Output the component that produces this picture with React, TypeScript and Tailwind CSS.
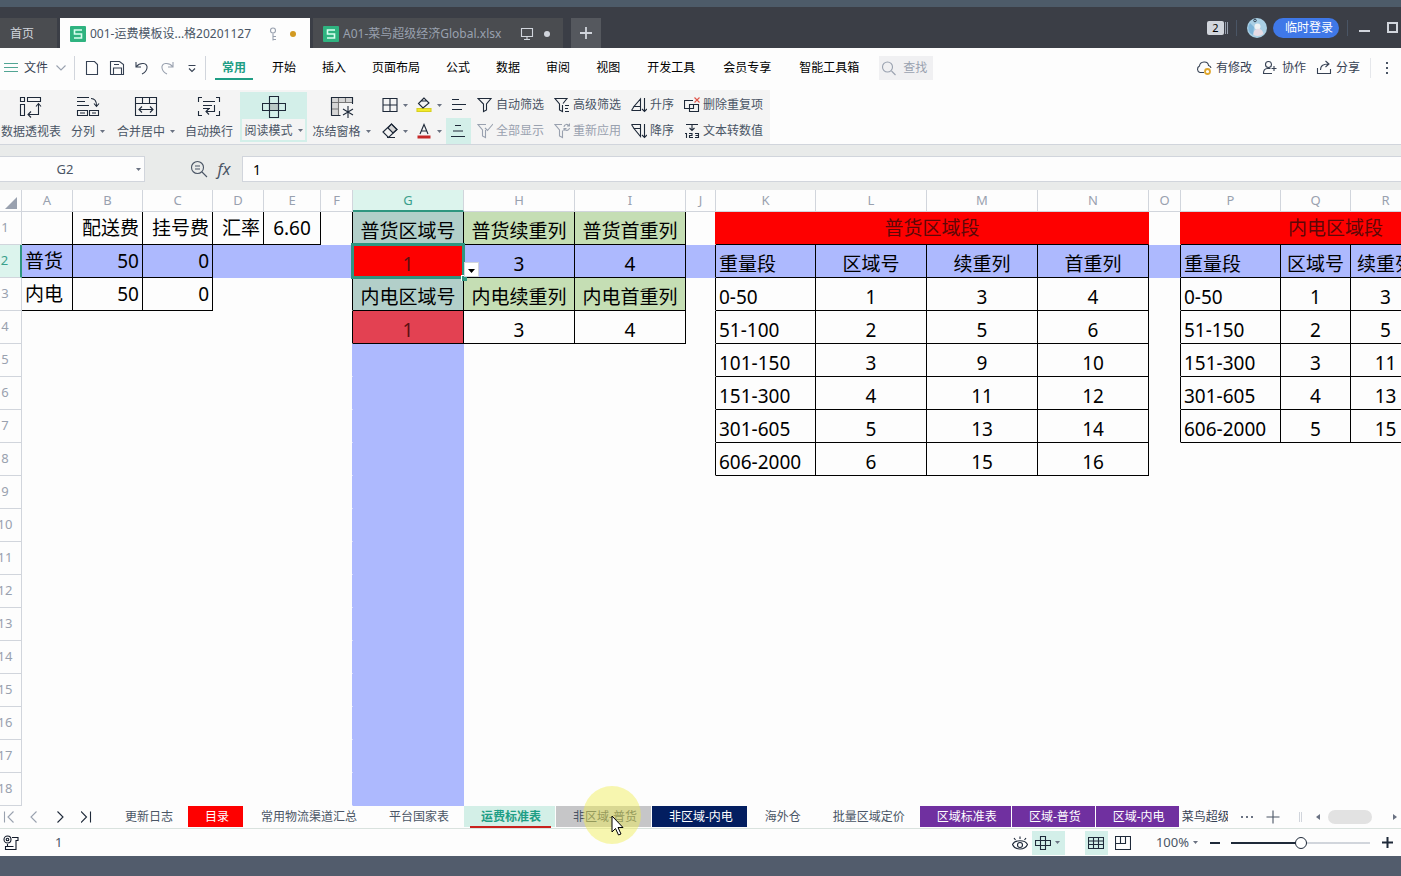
import { Fragment } from 'react';
import type { ReactNode } from 'react';

/* ---------- icons ---------- */

function Icon({ w = 16, h = 16, className = '', children }: { w?: number; h?: number; className?: string; children: ReactNode }) {
  return (
    <svg
      width={w}
      height={h}
      viewBox={`0 0 ${w} ${h}`}
      fill="none"
      stroke="currentColor"
      strokeWidth="1.1"
      className={`shrink-0 ${className}`}
      aria-hidden="true"
    >
      {children}
    </svg>
  );
}

const Caret = () => (
  <svg width="5" height="3" viewBox="0 0 5 3" className="shrink-0 fill-gray-500" aria-hidden="true">
    <path d="M0 0h5L2.5 3z" />
  </svg>
);

const SheetLogo = () => (
  <svg width="16" height="16" viewBox="0 0 16 16" className="shrink-0" aria-hidden="true">
    <rect width="16" height="16" rx="1" fill="#2fb380" />
    <path d="M12 4H4.5v4h7v4H4" fill="none" stroke="#d9fff0" strokeWidth="1.6" />
  </svg>
);

const FunnelPath = 'M1 1.5h13L9.5 7v6l-3 1.5V7z';

const Cross = () => (
  <Icon w={24} h={24}>
    <path d="M7.500 1.500h9v21h-9z M0.500 8.500h23v7h-23z" />
    <path d="M7.500 8.500h9v7h-9z" fill="#b9c9c6" />
  </Icon>
);

/* ---------- data ---------- */

const menus = ['开始', '插入', '页面布局', '公式', '数据', '审阅', '视图'];
const wideMenus = ['开发工具', '会员专享', '智能工具箱'];

const bigTools: { label: string; caret?: boolean; active?: boolean; width: string; icon: ReactNode }[] = [
  {
    label: '数据透视表',
    width: 'w-[62px]',
    icon: (
      <Icon w={24} h={24}>
        <path d="M1.500 2.500h4v4h-4z M8.500 2.500h13v4h-13z M1.500 9.500h4v11h-4z M19.500 9v10.500H9 M17 11.500l2.500-3 2.500 3 M12 16.500l-3 3 3 3" />
      </Icon>
    ),
  },
  {
    label: '分列',
    caret: true,
    width: 'w-[52px]',
    icon: (
      <Icon w={24} h={24}>
        <path d="M1 2.500h12 M1 6.500h8 M1 10.500h12 M1.500 15.500h10v5h-10z M13.500 15.500h9v5h-9z M4 18h5 M16 18h4 M15 3.500c4 0 5.500 2 5.500 7 M18 8.500l2.500 3 2.500-3" />
      </Icon>
    ),
  },
  {
    label: '合并居中',
    caret: true,
    width: 'w-[64px]',
    icon: (
      <Icon w={24} h={24}>
        <path d="M1.500 2.500h21v18h-21z M1.500 8.500h21 M8.500 2.500v6 M15.500 2.500v6 M5 14.500h14 M8 11.500l-3 3 3 3 M16 11.500l3 3-3 3" />
      </Icon>
    ),
  },
  {
    label: '自动换行',
    width: 'w-[62px]',
    icon: (
      <Icon w={24} h={24}>
        <path d="M5 2.500H1.500V7 M19 2.500h3.500V7 M5 20.500H1.500V16 M19 20.500h3.500V16 M6 6.500h12 M6 10.500h9 M6 13.500h7 M17.500 10v6.500H9 M12 13.500l-3 3 3 3" />
      </Icon>
    ),
  },
  { label: '阅读模式', caret: true, active: true, width: 'w-[67px]', icon: <Cross /> },
  {
    label: '冻结窗格',
    caret: true,
    width: 'w-[69px]',
    icon: (
      <Icon w={24} h={24}>
        <path d="M1.500 2.500h21v5h-21z M1.500 7.500h7v13h-7z" fill="#d6d6d6" stroke="#777" />
        <path d="M8.500 2.500v5 M15.500 2.500v5 M1.500 14h7" stroke="#777" />
        <path d="M1.500 20.500v-18h21V9 M1.500 20.500h9 M18 11v12 M13 14l10 6 M23 14l-10 6" />
      </Icon>
    ),
  },
];

const textTools: { label: string; off?: boolean; icon: ReactNode }[] = [
  { label: '自动筛选', icon: <Icon><path d={FunnelPath} /></Icon> },
  { label: '高级筛选', icon: <Icon><path d="M9 6.500l4-5H1L5.500 7v6l3 1.500V8 M11 8.500h4 M11 11.500h3 M11 14.500h4" /></Icon> },
  { label: '升序', icon: <Icon><path d="M0.500 13.500h9V2L3 9.500h6.500 M3 9.500l-2.500 4 M13.500 1v13.500 M11 12l2.500 2.500L16 12" /></Icon> },
  {
    label: '删除重复项',
    icon: (
      <Icon>
        <path d="M9 3.500H.500v8h9V7 M5.500 7.500h9v7h-9z" />
        <path d="M10.500.500l5 5 M15.500.500l-5 5" stroke="#e0554a" />
      </Icon>
    ),
  },
  { label: '全部显示', off: true, icon: <Icon><path d="M9 1.500H1L5.500 7v6l3 1.500V7 M8 5l2.500 2.500L16 1" /></Icon> },
  { label: '重新应用', off: true, icon: <Icon><path d="M8 1.500H1L5.500 7v6l3 1.500V7.500 M10 4c0-3 4-3.500 5-1 M15.500.500V3H13 M15.500 5c-.500 3-4 3-5 1 M10 8V5.500h2.500" /></Icon> },
  { label: '降序', icon: <Icon><path d="M.500 1.500h9v12L3 5.500h6.500 M3 5.500l-2.500-4 M13.500 1v13.500 M11 12l2.500 2.500L16 12" /></Icon> },
  {
    label: '文本转数值',
    icon: (
      <Icon>
        <path d="M2 1.500h12 M8 1.500v6 M5.500 5L8 7.500 10.500 5" />
        <path d="M1 10.500h1.500V15 M5 10.500h3v2H5.500v2H9 M11 10.500h3.500v4H11 M11.500 12.500h3" />
      </Icon>
    ),
  },
];

const columns: { name: string; width: number }[] = [
  { name: 'A', width: 51 },
  { name: 'B', width: 70 },
  { name: 'C', width: 70 },
  { name: 'D', width: 51 },
  { name: 'E', width: 57 },
  { name: 'F', width: 32 },
  { name: 'G', width: 111 },
  { name: 'H', width: 111 },
  { name: 'I', width: 111 },
  { name: 'J', width: 30 },
  { name: 'K', width: 100 },
  { name: 'L', width: 111 },
  { name: 'M', width: 111 },
  { name: 'N', width: 111 },
  { name: 'O', width: 32 },
  { name: 'P', width: 100 },
  { name: 'Q', width: 70 },
  { name: 'R', width: 70 },
  { name: 'S', width: 70 },
];

// [row][column letter] -> text
const values: Record<number, Record<string, string>> = {
  1: { B: '配送费', C: '挂号费', D: '汇率', E: '6.60', G: '普货区域号', H: '普货续重列', I: '普货首重列', K: '普货区域段', P: '内电区域段' },
  2: { A: '普货', B: '50', C: '0', G: '1', H: '3', I: '4', K: '重量段', L: '区域号', M: '续重列', N: '首重列', P: '重量段', Q: '区域号', R: '续重列' },
  3: { A: '内电', B: '50', C: '0', G: '内电区域号', H: '内电续重列', I: '内电首重列', K: '0-50', L: '1', M: '3', N: '4', P: '0-50', Q: '1', R: '3' },
  4: { G: '1', H: '3', I: '4', K: '51-100', L: '2', M: '5', N: '6', P: '51-150', Q: '2', R: '5' },
  5: { K: '101-150', L: '3', M: '9', N: '10', P: '151-300', Q: '3', R: '11' },
  6: { K: '151-300', L: '4', M: '11', N: '12', P: '301-605', Q: '4', R: '13' },
  7: { K: '301-605', L: '5', M: '13', N: '14', P: '606-2000', Q: '5', R: '15' },
  8: { K: '606-2000', L: '6', M: '15', N: '16' },
};

// bordered blocks: first col, last col, first row, last row
const blocks: [string, string, number, number][] = [
  ['A', 'C', 1, 3],
  ['D', 'E', 1, 1],
  ['G', 'I', 1, 4],
  ['K', 'N', 2, 8],
  ['P', 'S', 2, 7],
];

const inBlock = (col: string, row: number) =>
  blocks.some(([c1, c2, r1, r2]) => col >= c1 && col <= c2 && row >= r1 && row <= r2);

function cellClass(col: string, row: number) {
  const next = String.fromCharCode(col.charCodeAt(0) + 1);
  let right = inBlock(col, row) || inBlock(next, row) ? 'border-r-black' : 'border-r-transparent';
  if (row === 1 && (col === 'J' || col === 'O')) right = 'border-r-[#fe0000]';
  if (row > 4 && col === 'F') right = 'border-r-[#adb9fe]';
  const bottom = inBlock(col, row) || inBlock(col, row + 1) ? 'border-b-black' : 'border-b-transparent';

  let bg = '';
  if (row === 2) bg = 'bg-[#adb9fe]';
  if (col === 'G' && row > 4) bg = 'bg-[#adb9fe]';
  if (col === 'G' && (row === 1 || row === 3)) bg = 'bg-[#b2cfc9]';
  if ((col === 'H' || col === 'I') && (row === 1 || row === 3)) bg = 'bg-[#c5deb4]';
  if (col === 'G' && row === 2) bg = 'bg-[#fe0000] text-[#5c1010]';
  if (col === 'G' && row === 4) bg = 'bg-[#e34152] text-[#5c1010]';
  if (row === 1 && (col === 'K' || col === 'P')) bg = 'bg-[#fe0000] text-[#5c0808]';

  let align = 'text-center';
  if (col === 'A' || col === 'K' || col === 'P') align = 'text-left pl-[3px]';
  if (col === 'B' || col === 'C' || col === 'D') align = 'text-right pr-[3px]';
  if (row === 1 && (col === 'K' || col === 'P')) align = 'text-center';

  const drop = col >= 'G' && !(row === 1 && col >= 'K') ? 'pt-1.5' : '';
  return `relative h-[33px] p-0 border-r border-b whitespace-nowrap ${right} ${bottom} ${bg} ${align} ${drop}`;
}

const sheetTabs: { name: string; style: string }[] = [
  { name: '更新日志', style: 'text-gray-600' },
  { name: '目录', style: 'bg-[#fe0000] text-white' },
  { name: '常用物流渠道汇总', style: 'text-gray-600' },
  { name: '平台国家表', style: 'text-gray-600' },
  { name: '运费标准表', style: 'bg-[#d3efe7] text-[#1f9e85] font-bold' },
  { name: '非区域-普货', style: 'bg-[#c6c6c8] text-gray-600' },
  { name: '非区域-内电', style: 'bg-[#031e60] text-white' },
  { name: '海外仓', style: 'text-gray-600' },
  { name: '批量区域定价', style: 'text-gray-600' },
  { name: '区域标准表', style: 'bg-[#7030a0] text-white' },
  { name: '区域-普货', style: 'bg-[#7030a0] text-white' },
  { name: '区域-内电', style: 'bg-[#7030a0] text-white' },
];

/* ---------- sections ---------- */

function TitleBar() {
  return (
    <header className="shrink-0 h-12 flex items-end border-t-[7px] border-[#4d5b69] bg-[#3b3e46] text-xs">
      <button className="w-[57px] h-[30px] pl-2.5 pt-0.5 mr-[3px] text-left bg-[#4a4c50] text-gray-300">首页</button>
      <button className="w-[250px] h-[30px] pl-2.5 pt-0.5 flex items-center bg-[#fdfdfd] text-gray-600">
        <SheetLogo />
        <span className="ml-1 w-[174px] text-left">001-运费模板设...格20201127</span>
        <Icon w={10} h={14} className="ml-1 text-gray-400">
          <path d="M5 6.500v7 M5 9.500h3 M5 12.500h3" />
          <circle cx="5" cy="3.500" r="2.500" />
        </Icon>
        <span className="ml-3 size-1.5 rounded-full bg-[#d29a22]" />
      </button>
      <button className="w-[250px] ml-[3px] h-[30px] pl-2.5 pt-0.5 flex items-center bg-[#4a4c50] text-gray-400">
        <SheetLogo />
        <span className="ml-1 w-[177px] text-left">A01-菜鸟超级经济Global.xlsx</span>
        <Icon w={14} h={14} className="text-gray-300">
          <path d="M1.500 1.500h11v8h-11z M7 9.500v3 M4 12.500h6" />
        </Icon>
        <span className="ml-2.5 size-1.5 rounded-full bg-gray-300" />
      </button>
      <button className="ml-2 w-[30px] h-[30px] flex items-center justify-center bg-[#55585e] text-gray-300" aria-label="新建标签">
        <Icon w={14} h={14}>
          <path d="M7 1v12 M1 7h12" strokeWidth="1.800" />
        </Icon>
      </button>

      <div className="ml-auto h-full flex items-center">
        <button className="flex items-center" aria-label="窗口 2">
          <span className="w-[17px] h-3.5 rounded-xs bg-gray-300 text-black text-[11px] leading-[14px] text-center">2</span>
          <span className="ml-px w-[3px] h-3 border-x border-gray-400" />
        </button>
        <span className="ml-2 mr-2.5 w-px h-4 bg-gray-600" />
        <svg width="20" height="20" viewBox="0 0 20 20" aria-hidden="true">
          <circle cx="10" cy="10" r="10" fill="#a9cfe4" />
          <path d="M3 5a9 9 0 0 0 0 10l3 2 1-8z" fill="#7db4d8" />
          <circle cx="10.500" cy="8.500" r="3" fill="#eef1f3" />
          <path d="M6.500 17c-.500-8 9-8 10-1a10 10 0 0 1-10 1z" fill="#e6dbe4" />
          <circle cx="8" cy="2.500" r="1.300" fill="none" stroke="#345" />
        </svg>
        <button className="ml-1.5 w-[66px] h-5 pl-1.5 rounded-full bg-[#3f78e8] text-white leading-5">临时登录</button>
        <span className="ml-2 w-px h-4 bg-gray-600" />
        <button className="ml-[11px] w-[11px] h-5 flex items-center" aria-label="最小化">
          <span className="mt-1.5 w-full h-0.5 bg-gray-300" />
        </button>
        <button className="ml-[17px] mr-[3px] size-[11px] border-2 border-gray-300" aria-label="最大化" />
      </div>
    </header>
  );
}

function MenuBar() {
  return (
    <nav className="shrink-0 h-[42px] pb-0.5 flex items-center bg-[#fdfdfd] text-xs text-black">
      <button className="ml-1 flex items-center text-gray-700">
        <Icon w={14} h={12} className="text-[#52a594]">
          <path d="M0 1.500h14 M0 5.500h14 M0 9.500h14" />
        </Icon>
        <span className="ml-1.5">文件</span>
        <Icon w={10} h={6} className="ml-2 text-gray-400">
          <path d="M.500.500L5 5 9.500.500" />
        </Icon>
      </button>
      <span className="ml-2 w-px h-6 bg-gray-300" />
      <div className="ml-[9px] flex items-center gap-[9px] text-gray-700">
        <button aria-label="新建"><Icon><path d="M2.500 1.500h8l3 3v10h-11z" /></Icon></button>
        <button aria-label="保存"><Icon><path d="M1.500 3.500v-2h9l4 3v10h-13z M4.500 14v-6h8v6 M5 4.500h5" /></Icon></button>
        <button aria-label="撤销"><Icon><path d="M2 2v5h5 M2.500 6.500C6 2 14 2.500 13 8c-.500 3-3 5-5 6" /></Icon></button>
        <button aria-label="恢复" className="text-gray-400"><Icon><path d="M14 2v5H9 M13.500 6.500C10 2 2 2.500 3 8c.500 3 3 5 5 6" /></Icon></button>
        <button aria-label="更多"><Icon><path d="M4.500 5.500h7 M5 8.500l3 3 3-3" /></Icon></button>
      </div>
      <span className="ml-[5px] w-px h-6 bg-gray-300" />
      <button className="ml-[9px] mr-1.5 px-[7px] pt-1 pb-0.5 border-b-2 border-[#1f9e85] text-[#1f9e85] font-bold">常用</button>
      {menus.map((m) => (
        <button key={m} className="px-[13px]">{m}</button>
      ))}
      {wideMenus.map((m) => (
        <button key={m} className="px-3.5">{m}</button>
      ))}
      <label className="ml-1.5 h-6 w-[54px] pl-0.5 flex items-center gap-1.5 bg-[#f0f0f2] text-gray-400">
        <Icon>
          <circle cx="6.500" cy="7" r="5" />
          <path d="M10.500 11l4 4" />
        </Icon>
        <input className="w-7 bg-transparent outline-none placeholder:text-gray-400" placeholder="查找" aria-label="查找" />
      </label>

      <div className="ml-auto flex items-center text-gray-700">
        <button className="flex items-center gap-1">
          <Icon>
            <path d="M8 12.500H4A3.500 3.500 0 0 1 3.500 6C4 1 12 .500 12.500 5.500A3 3 0 0 1 15 8" />
            <circle cx="11.500" cy="11.500" r="2.500" stroke="#dfa62c" strokeWidth="1.800" />
          </Icon>
          有修改
        </button>
        <button className="ml-2.5 flex items-center gap-1">
          <Icon>
            <circle cx="6.500" cy="4.500" r="3" />
            <path d="M10 13.500H1.500c0-3 1-5 4-5h3 M12 6v5 M9.500 8.500h5" />
          </Icon>
          协作
        </button>
        <button className="ml-2.5 flex items-center gap-1">
          <Icon>
            <path d="M1.500 8v5.500h13V9 M4.500 10c0-4 2-6 8-6 M9.500 1l3.500 3-3.500 3" />
          </Icon>
          分享
        </button>
        <span className="ml-2.5 w-px h-5 bg-gray-200" />
        <button className="ml-3 mr-2.5" aria-label="更多选项">
          <svg width="8" height="14" viewBox="0 0 8 14" className="fill-gray-600" aria-hidden="true">
            <path d="M3 1h2v2H3z M3 6h2v2H3z M3 11h2v2H3z" />
          </svg>
        </button>
      </div>
    </nav>
  );
}

function Ribbon() {
  return (
    <div className="shrink-0 h-[54px] flex bg-[#fdfdfd] text-xs text-gray-600">
      <div className="flex bg-[#f4f4f4]">
        {bigTools.map((t) => (
          <button
            key={t.label}
            className={`${t.width} h-[50px] mt-0.5 pt-[3px] flex flex-col items-center whitespace-nowrap ${t.active ? 'bg-[#d3efe9]' : ''}`}
          >
            <span className="text-gray-800">{t.icon}</span>
            <span className={`self-stretch flex-1 pt-0.5 flex items-center justify-center gap-[5px] ${t.active ? 'bg-[#f4f4f4] border-2 border-t-0 border-[#d3efe9]' : ''}`}>
              {t.label}
              {t.caret && <Caret />}
            </span>
          </button>
        ))}

        <div className="grid grid-cols-[34px_32px_23px] grid-rows-[26px_26px] pl-1.5 pt-0.5 text-gray-800">
          <button className="flex items-center gap-[5px]" aria-label="边框">
            <Icon><path d="M1 1.500h14v13H1z M8 1.500v13 M1 8h14" /></Icon>
            <Caret />
          </button>
          <button className="flex items-center gap-[5px]" aria-label="填充颜色">
            <Icon>
              <path d="M1 11.500h14v3H1z" fill="#f2ea2a" stroke="#d8cf20" />
              <path d="M8 1L2.500 6.500 7 11l6-5z M5 4h6" />
            </Icon>
            <Caret />
          </button>
          <button className="pl-0.5 flex items-center" aria-label="左对齐">
            <Icon><path d="M2 2.500h7 M2 7.500h14 M2 12.500h10" /></Icon>
          </button>
          <button className="flex items-center gap-[5px]" aria-label="清除">
            <Icon>
              <path d="M6 5l5 5 4-3.500L9.500 1z" fill="#d5d5d5" />
              <path d="M1 9l8.500-8L15 6.500 6.500 14.500z M5 14.500h8" />
            </Icon>
            <Caret />
          </button>
          <button className="flex items-center gap-[5px]" aria-label="字体颜色">
            <Icon>
              <path d="M4 11L8 1.500 12 11 M5.500 8h5" />
              <path d="M1.500 14h13" stroke="#c62828" strokeWidth="3" />
            </Icon>
            <Caret />
          </button>
          <button className="-ml-0.5 pl-1 bg-[#d3efe9] flex items-center" aria-label="居中对齐">
            <Icon><path d="M5 2.500h6 M3 8h10 M1 13.500h14" /></Icon>
          </button>
        </div>

        <div className="grid grid-cols-[77px_77px_53px_86px] grid-rows-[26px_26px] pl-1.5 pt-0.5">
          {textTools.map((t) => (
            <button key={t.label} className={`flex items-center gap-[3px] whitespace-nowrap ${t.off ? 'text-gray-400' : ''}`}>
              <span className={t.off ? 'text-gray-400' : 'text-gray-800'}>{t.icon}</span>
              {t.label}
            </button>
          ))}
        </div>
      </div>
    </div>
  );
}

function FormulaBar() {
  return (
    <div className="shrink-0 h-[46px] pt-[3px] flex items-center border-t border-gray-300 bg-[#e9ebea] text-gray-600">
      <label className="relative w-[145px] h-[26px] flex items-center border border-l-0 border-gray-300 bg-[#fdfdfd]">
        <input className="w-[130px] pt-0.5 text-center text-[13px] outline-none" defaultValue="G2" aria-label="名称框" />
        <span className="ml-1.5"><Caret /></span>
      </label>
      <button className="ml-[45px]" aria-label="搜索函数">
        <Icon w={18} h={18}>
          <circle cx="7.500" cy="7.500" r="6" />
          <path d="M12 12l5 5 M5 6h5 M5 9h5" />
        </Icon>
      </button>
      <button className="ml-2 w-4 text-[16px] leading-5 italic font-['Noto_Sans']" aria-label="插入函数">fx</button>
      <input
        className="ml-2.5 flex-1 h-[26px] pl-2.5 border border-r-0 border-gray-300 bg-[#fdfdfd] text-sm text-black outline-none"
        defaultValue="1"
        aria-label="编辑栏"
      />
    </div>
  );
}

function Sheet() {
  const rows = Array.from({ length: 18 }, (_, i) => i + 1);
  return (
    <main className="flex-1 min-h-0 overflow-hidden bg-[#fdfdfd]">
      <table className="-ml-[11px] w-[1502px] table-fixed border-separate border-spacing-0 text-[19px] leading-6 text-black">
        <colgroup>
          <col style={{ width: 33 }} />
          {columns.map((c) => (
            <col key={c.name} style={{ width: c.width }} />
          ))}
        </colgroup>
        <thead>
          <tr className="text-[13px] leading-[18px] text-gray-400">
            <th className="h-[22px] p-0 border-r border-b border-gray-300" aria-label="全选">
              <svg width="12" height="12" viewBox="0 0 12 12" className="ml-auto mr-1 mt-1 fill-gray-400" aria-hidden="true">
                <path d="M12 0v12H0z" />
              </svg>
            </th>
            {columns.map((c) => (
              <th
                key={c.name}
                className={`h-[22px] p-0 font-normal border-r ${
                  c.name === 'G' ? 'bg-[#dcf4ed] text-[#3aa08c] border-b-2 border-b-[#2f9680] border-r-gray-300' : 'pb-px border-b border-gray-300'
                }`}
              >
                {c.name}
              </th>
            ))}
          </tr>
        </thead>
        <tbody>
          {rows.map((r) => (
            <tr key={r}>
              <th
                className={`h-[33px] p-0 pb-0.5 text-[13px] font-normal border-b border-b-gray-300 ${
                  r === 2 ? 'bg-[#dcf4ed] text-[#3aa08c] border-r-2 border-r-[#2f9680]' : 'text-gray-400 border-r border-r-gray-300'
                }`}
              >
                {r}
              </th>
              {columns.map((c) => {
                const merged = r === 1 && (c.name === 'K' || c.name === 'P');
                if (r === 1 && 'LMNQRS'.includes(c.name)) return null;
                const selected = r === 2 && c.name === 'G';
                return (
                  <td key={c.name} colSpan={merged ? 4 : 1} className={cellClass(c.name, r)}>
                    {values[r]?.[c.name]}
                    {selected && (
                      <Fragment>
                        <span className="absolute z-10 -inset-0.5 border-[3px] border-[#2f9680]" />
                        <span className="absolute z-10 -right-1 -bottom-1 size-[6px] border-t border-l border-white bg-[#2f9680]" />
                        <button
                          className="absolute z-10 -right-4 bottom-0 size-[15px] flex items-center justify-center border border-gray-300 bg-white"
                          aria-label="下拉列表"
                        >
                          <svg width="7" height="4" viewBox="0 0 7 4" className="mt-0.5" aria-hidden="true">
                            <path d="M0 0h7L3.500 4z" />
                          </svg>
                        </button>
                      </Fragment>
                    )}
                  </td>
                );
              })}
            </tr>
          ))}
        </tbody>
      </table>
    </main>
  );
}

function SheetTabs() {
  return (
    <div className="shrink-0 h-[23px] flex items-start border-b border-[#d9e2de] bg-[#fdfdfd] text-xs">
      <div className="w-[108px] h-[22px] pl-[3px] flex items-center gap-2.5 text-gray-800">
        <button aria-label="第一个" className="text-gray-400"><Icon><path d="M1.500 2.500v11 M10.500 2.500L5 8l5.500 5.500" /></Icon></button>
        <button aria-label="上一个" className="text-gray-400"><Icon><path d="M7.500 2.500L2 8l5.500 5.500" /></Icon></button>
        <button aria-label="下一个"><Icon><path d="M2.500 2.500L8 8l-5.500 5.500" /></Icon></button>
        <button aria-label="最后一个"><Icon><path d="M0 2.500L5.500 8 0 13.500 M9.500 2.500v11" /></Icon></button>
      </div>
      <div className="flex gap-px">
        {sheetTabs.map((t) => (
          <button key={t.name} className={`relative h-[21px] pl-[17px] pr-3.5 leading-[22px] whitespace-nowrap ${t.style}`}>
            {t.name}
            {t.name === '运费标准表' && <span className="absolute left-1.5 right-1 -bottom-px h-0.5 bg-[#c9211e]" />}
            {t.name === '非区域-普货' && (
              <Fragment>
                <span className="absolute z-10 left-[27px] -top-5 size-[58px] rounded-full bg-[#f0ee50]/45" />
                <svg width="13" height="21" viewBox="0 0 13 21" className="absolute z-20 left-[55px] top-[9px]" aria-hidden="true">
                  <path d="M1 1v16l3.500-3.500 3 6.500 2.500-1-3-6.500h5z" fill="#fff" stroke="#000" />
                </svg>
              </Fragment>
            )}
          </button>
        ))}
      </div>
      <button className="w-[46px] ml-[3px] h-[21px] overflow-hidden whitespace-nowrap text-left leading-[22px] text-gray-700">菜鸟超级经济</button>
      <div className="ml-auto h-[22px] flex items-center text-gray-600">
        <button className="flex items-center gap-[3px]" aria-label="更多工作表">
          <span className="size-0.5 bg-gray-500" />
          <span className="size-0.5 bg-gray-500" />
          <span className="size-0.5 bg-gray-500" />
        </button>
        <button className="ml-3" aria-label="新建工作表"><Icon><path d="M8 1.500v13 M1.500 8h13" /></Icon></button>
        <span className="ml-[18px] w-[3px] h-2.5 border-x border-gray-300" />
        <button className="ml-3.5" aria-label="向左滚动">
          <svg width="4" height="6" viewBox="0 0 4 6" className="fill-gray-500" aria-hidden="true"><path d="M4 0v6L0 3z" /></svg>
        </button>
        <span className="ml-2 w-11 h-3.5 rounded-full bg-[#e2e2e2]" />
        <button className="ml-[21px] mr-1" aria-label="向右滚动">
          <svg width="4" height="6" viewBox="0 0 4 6" className="fill-gray-500" aria-hidden="true"><path d="M0 0v6l4-3z" /></svg>
        </button>
      </div>
    </div>
  );
}

function StatusBar() {
  return (
    <footer className="shrink-0 h-[47px] pb-5 bg-[#525c6c] text-[13px] text-gray-600">
      <div className="h-[27px] flex items-center bg-[#fdfdfd]">
        <button className="ml-[3px] text-gray-900" aria-label="宏">
          <Icon>
            <circle cx="4.500" cy="4.500" r="3.500" />
            <circle cx="4.500" cy="4.500" r="1.300" />
            <path d="M9 2.500h6v3h-2v9H2.500v-3h8 M4.500 9v2.500" />
          </Icon>
        </button>
        <span className="ml-9">1</span>
        <div className="ml-auto flex items-center text-gray-800">
          <button aria-label="护眼模式">
            <Icon>
              <path d="M.500 9.500C3 4.500 13 4.500 15.500 9.500 13 15.500 3 15.500.500 9.500z M8 4V1.500 M3.500 5L2 3 M12.500 5L14 3" />
              <circle cx="8" cy="10" r="2.500" />
            </Icon>
          </button>
          <button className="ml-1 w-[33px] h-6 pl-[3px] flex items-center gap-1 bg-[#d3efe9]" aria-label="阅读模式">
            <Icon><path d="M5.500 1.500h5v13h-5z M.500 5.500h15v5H.500z" /></Icon>
            <Caret />
          </button>
          <button className="ml-5 w-[23px] h-6 flex items-center justify-center bg-[#d3efe9]" aria-label="普通视图">
            <Icon><path d="M.500 2.500h15v11H.500z M.500 6h15 M.500 9.500h15 M5.500 2.500v11 M10.500 2.500v11" /></Icon>
          </button>
          <button className="ml-[7px]" aria-label="页面布局视图">
            <Icon><path d="M.500 1.500h15v13H.500z M5.500 1.500v7 M10.500 1.500v7H.500" /></Icon>
          </button>
          <button className="ml-[25px] flex items-center gap-1 text-[13px] text-gray-600">
            100%
            <Caret />
          </button>
          <button className="ml-3 w-2.5 h-0.5 bg-gray-800" aria-label="缩小" />
          <input
            type="range"
            defaultValue={50}
            aria-label="缩放"
            className="ml-[11px] w-[139px] h-0.5 appearance-none bg-linear-to-r from-gray-800 from-50% to-gray-300 to-50% [&::-webkit-slider-thumb]:appearance-none [&::-webkit-slider-thumb]:size-3 [&::-webkit-slider-thumb]:rounded-full [&::-webkit-slider-thumb]:border [&::-webkit-slider-thumb]:border-gray-800 [&::-webkit-slider-thumb]:bg-white"
          />
          <button className="ml-3 mr-2" aria-label="放大">
            <Icon w={11} h={11}><path d="M5.500 0v11 M0 5.500h11" strokeWidth="2" /></Icon>
          </button>
        </div>
      </div>
    </footer>
  );
}

export default function App() {
  return (
    <div className="h-screen flex flex-col overflow-hidden font-['Noto_Sans','Noto_Sans_CJK_SC',sans-serif]">
      <TitleBar />
      <MenuBar />
      <Ribbon />
      <FormulaBar />
      <Sheet />
      <SheetTabs />
      <StatusBar />
    </div>
  );
}
